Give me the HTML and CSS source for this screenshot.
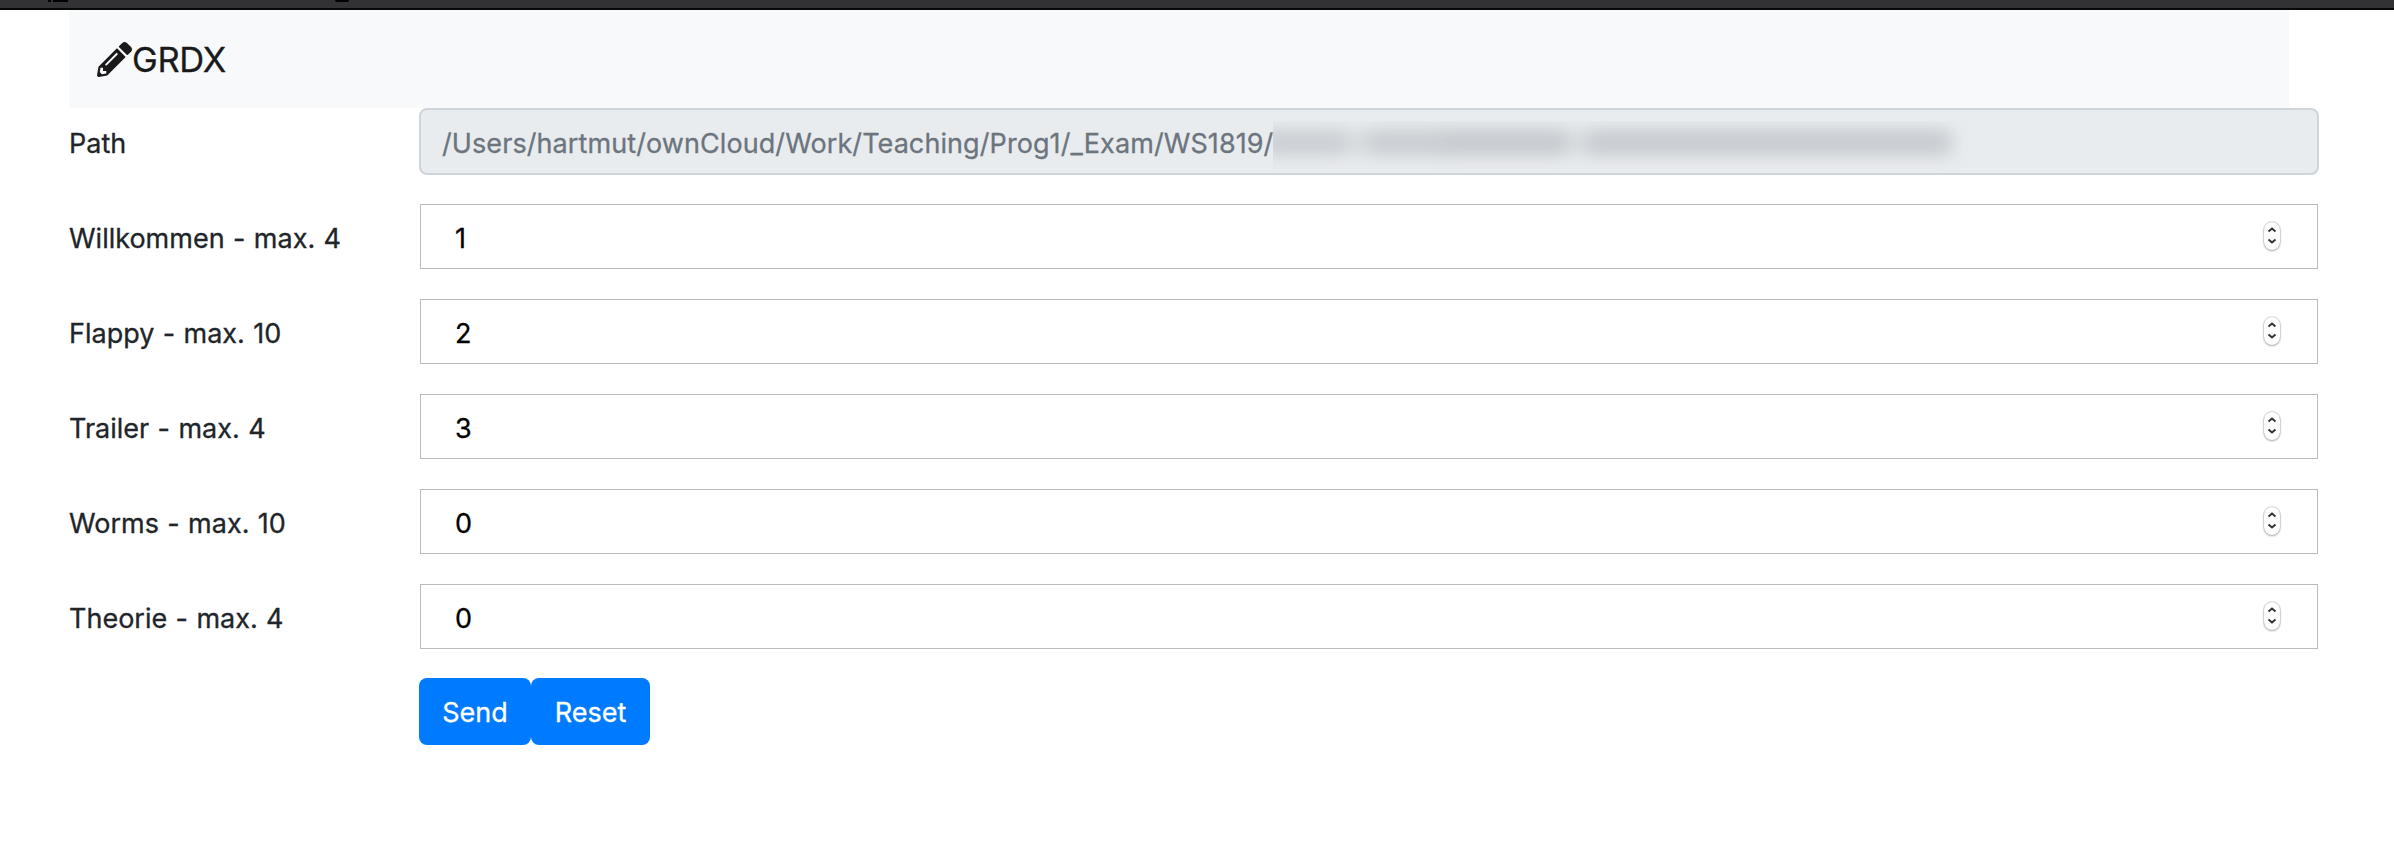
FILE: index.html
```html
<!DOCTYPE html>
<html lang="de">
<head>
<meta charset="utf-8">
<title>GRDX</title>
<link rel="stylesheet" href="styles.css">
</head>
<body>
<div class="window-bar"><i class="mark mark-dot"></i><i class="mark mark-tab"></i><i class="mark mark-round"></i></div>
<nav class="navbar">
  <svg class="pencil" viewBox="0 0 512 512" aria-hidden="true"><path d="M497.9 142.1l-46.1 46.1c-4.7 4.700-12.300 4.700-17 0l-111-111c-4.700-4.700-4.700-12.300 0-17l46.100-46.100c18.700-18.700 49.100-18.700 67.900 0l60.100 60.100c18.800 18.700 18.800 49.100 0 67.900zM284.200 99.800L21.600 362.400.4 483.900c-2.900 16.400 11.400 30.600 27.800 27.800l121.500-21.300 262.600-262.600c4.700-4.700 4.700-12.300 0-17l-111-111c-4.800-4.700-12.400-4.700-17.100 0zM124.100 339.900c-5.500-5.500-5.500-14.300 0-19.800l154-154c5.500-5.500 14.300-5.500 19.800 0s5.500 14.300 0 19.800l-154 154c-5.500 5.500-14.300 5.500-19.800 0zM88 424h48v36.300l-64.500 11.300-31.100-31.100L51.700 376H88v48z"/></svg><span class="brand">GRDX</span>
</nav>
<form class="form">
  <div class="row"><label class="label">Path</label><div class="path"><span class="path-text">/Users/hartmut/ownCloud/Work/Teaching/Prog1/_Exam/WS1819/</span><span class="redacted"><i class="smear s0"></i><i class="smear s1"></i><i class="smear s2"></i><i class="smear s3"></i><i class="smear s4"></i></span></div></div>
  <div class="row"><label class="label">Willkommen - max. 4</label><div class="number"><span>1</span><svg class="stepper" viewBox="0 0 16 28"><path d="M4.500 9.500 8 6.500l3.500 3M4.500 17.500 8 20.500l3.500-3"/></svg></div></div>
  <div class="row"><label class="label">Flappy - max. 10</label><div class="number"><span>2</span><svg class="stepper" viewBox="0 0 16 28"><path d="M4.500 9.500 8 6.500l3.500 3M4.500 17.500 8 20.500l3.500-3"/></svg></div></div>
  <div class="row"><label class="label">Trailer - max. 4</label><div class="number"><span>3</span><svg class="stepper" viewBox="0 0 16 28"><path d="M4.500 9.500 8 6.500l3.500 3M4.500 17.500 8 20.500l3.500-3"/></svg></div></div>
  <div class="row"><label class="label">Worms - max. 10</label><div class="number"><span>0</span><svg class="stepper" viewBox="0 0 16 28"><path d="M4.500 9.500 8 6.500l3.500 3M4.500 17.500 8 20.500l3.500-3"/></svg></div></div>
  <div class="row"><label class="label">Theorie - max. 4</label><div class="number"><span>0</span><svg class="stepper" viewBox="0 0 16 28"><path d="M4.500 9.500 8 6.500l3.500 3M4.500 17.500 8 20.500l3.500-3"/></svg></div></div>
  <div class="actions"><button type="button" class="btn send"><span>Send</span></button><button type="button" class="btn reset"><span>Reset</span></button></div>
</form>
</body>
</html>
```
FILE: styles.css
```css
* { box-sizing: border-box; }
body {
  margin: 0;
  background: #fff;
  color: #212529;
  font: 27px/40px Inter, "Liberation Sans", sans-serif;
  -webkit-text-stroke: 0.3px currentColor;
}
.window-bar {
  position: relative;
  height: 10px;
  background: #323234;
  border-bottom: 2px solid #080808;
}
.mark { position: absolute; top: 0; height: 2px; background: #000; }
.mark-dot { left: 48px; width: 3px; }
.mark-tab { left: 53px; width: 15px; }
.mark-round { left: 335px; width: 14px; border-radius: 0 0 5px 5px; }
.navbar {
  display: flex;
  align-items: center;
  width: 2220px;
  height: 98px;
  margin-left: 69px;
  padding: 0 28px;
  background: #f8f9fb;
  color: #1a1a1a;
}
.pencil { width: 35px; height: 35px; fill: currentColor; }
.brand { padding-top: 2px; font-size: 34.500px; letter-spacing: -0.300px; }
.form { display: flex; flex-direction: column; gap: 28px; padding: 0 75px 0 69px; }
.row { display: flex; align-items: center; height: 67px; }
.label { width: 350px; padding-top: 4px; white-space: nowrap; word-spacing: 0.800px; }
.path {
  display: flex;
  align-items: center;
  flex: 1;
  height: 67px;
  padding-left: 21px;
  border: 2px solid #ced4da;
  border-radius: 8px;
  background: #e9ecef;
  color: #6c757d;
}
.path-text { padding-top: 4px; letter-spacing: 0.085px; }
.redacted { position: relative; top: 4px; width: 697px; height: 49px; overflow: hidden; }
.smear { position: absolute; top: 10px; height: 23px; background: #bfc3c8; filter: blur(9px); }
.s0 { left: -20px; width: 700px; opacity: .4; }
.s1 { left: -10px; width: 84px; opacity: .55; }
.s2 { left: 94px; width: 80px; opacity: .6; }
.s3 { left: 170px; width: 124px; opacity: .75; }
.s4 { left: 314px; width: 362px; opacity: .7; }
.number {
  display: flex;
  align-items: center;
  justify-content: space-between;
  flex: 1;
  height: 65px;
  margin: 0 1px;
  padding: 0 37px 0 34px;
  border: 1px solid #bbb;
  color: #000;
}
.number span { padding-top: 4px; }
.stepper {
  width: 16px;
  height: 28px;
  margin-bottom: 2px;
  border-radius: 8px;
  box-shadow: 0 0 1px 0.500px #bbb, 0 1px 2px #aaa;
  fill: none;
  stroke: #333;
  stroke-width: 2;
}
.actions { display: flex; padding-left: 350px; }
.btn {
  height: 67px;
  padding: 3px 0 0;
  border: 0;
  border-radius: 8px;
  background: #007bff;
  color: #fff;
  font: inherit;
}
.send { width: 112px; }
.reset { width: 119px; }
```
